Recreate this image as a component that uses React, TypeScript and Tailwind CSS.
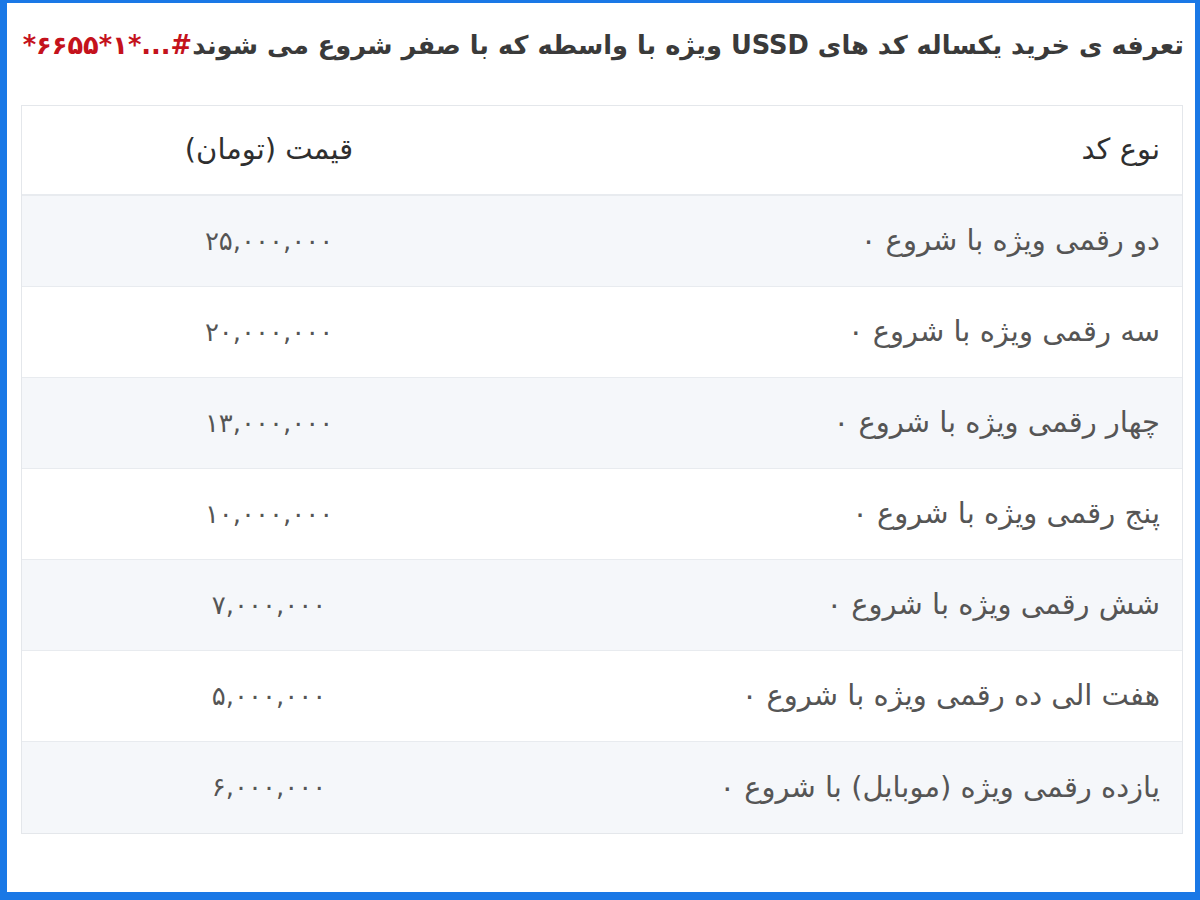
import React from 'react';

const rows = [
  { name: 'دو رقمی ویژه با شروع ۰', price: '۲۵,۰۰۰,۰۰۰' },
  { name: 'سه رقمی ویژه با شروع ۰', price: '۲۰,۰۰۰,۰۰۰' },
  { name: 'چهار رقمی ویژه با شروع ۰', price: '۱۳,۰۰۰,۰۰۰' },
  { name: 'پنج رقمی ویژه با شروع ۰', price: '۱۰,۰۰۰,۰۰۰' },
  { name: 'شش رقمی ویژه با شروع ۰', price: '۷,۰۰۰,۰۰۰' },
  { name: 'هفت الی ده رقمی ویژه با شروع ۰', price: '۵,۰۰۰,۰۰۰' },
  { name: 'یازده رقمی ویژه (موبایل) با شروع ۰', price: '۶,۰۰۰,۰۰۰' },
];

export default function App() {
  return (
    <div
      dir="rtl"
      className="w-[1200px] h-[900px] bg-white border-l-[7px] border-t-[3px] border-r-[5px] border-b-[8px] border-[#1a78e6] font-['DejaVu_Sans',sans-serif]"
    >
      <h1 className="pt-[26px] pr-[11px] text-[25.7px] leading-[32px] font-bold text-[#3a3a3a] whitespace-nowrap">
        تعرفه ی خرید یکساله کد های USSD ویژه با واسطه که با صفر شروع می شوند
        <bdi dir="ltr" className="text-[#c4121c]">*۶۶۵۵*۱*...#</bdi>
      </h1>

      <div className="mt-[44px] mr-[12px] ml-[14px] border border-[#e4e7eb]">
        <div className="flex h-[90px] items-center bg-white border-b-2 border-[#e8ebef]">
          <div className="flex-1 pr-[22px] text-[29px] text-[#2f2f2f]">نوع کد</div>
          <div className="w-[494px] text-center text-[29px] text-[#2f2f2f]">قیمت (تومان)</div>
        </div>
        {rows.map((r, i) => (
          <div
            key={r.price + i}
            className={`flex h-[91px] items-center ${i % 2 === 0 ? 'bg-[#f5f7fa]' : 'bg-white'} ${i < rows.length - 1 ? 'border-b border-[#e8ebef]' : ''}`}
          >
            <div className="flex-1 pr-[22px] text-[29px] text-[#555555]">{r.name}</div>
            <div className="w-[494px] text-center text-[26px] text-[#555555]">
              <bdi dir="ltr">{r.price}</bdi>
            </div>
          </div>
        ))}
      </div>
    </div>
  );
}
